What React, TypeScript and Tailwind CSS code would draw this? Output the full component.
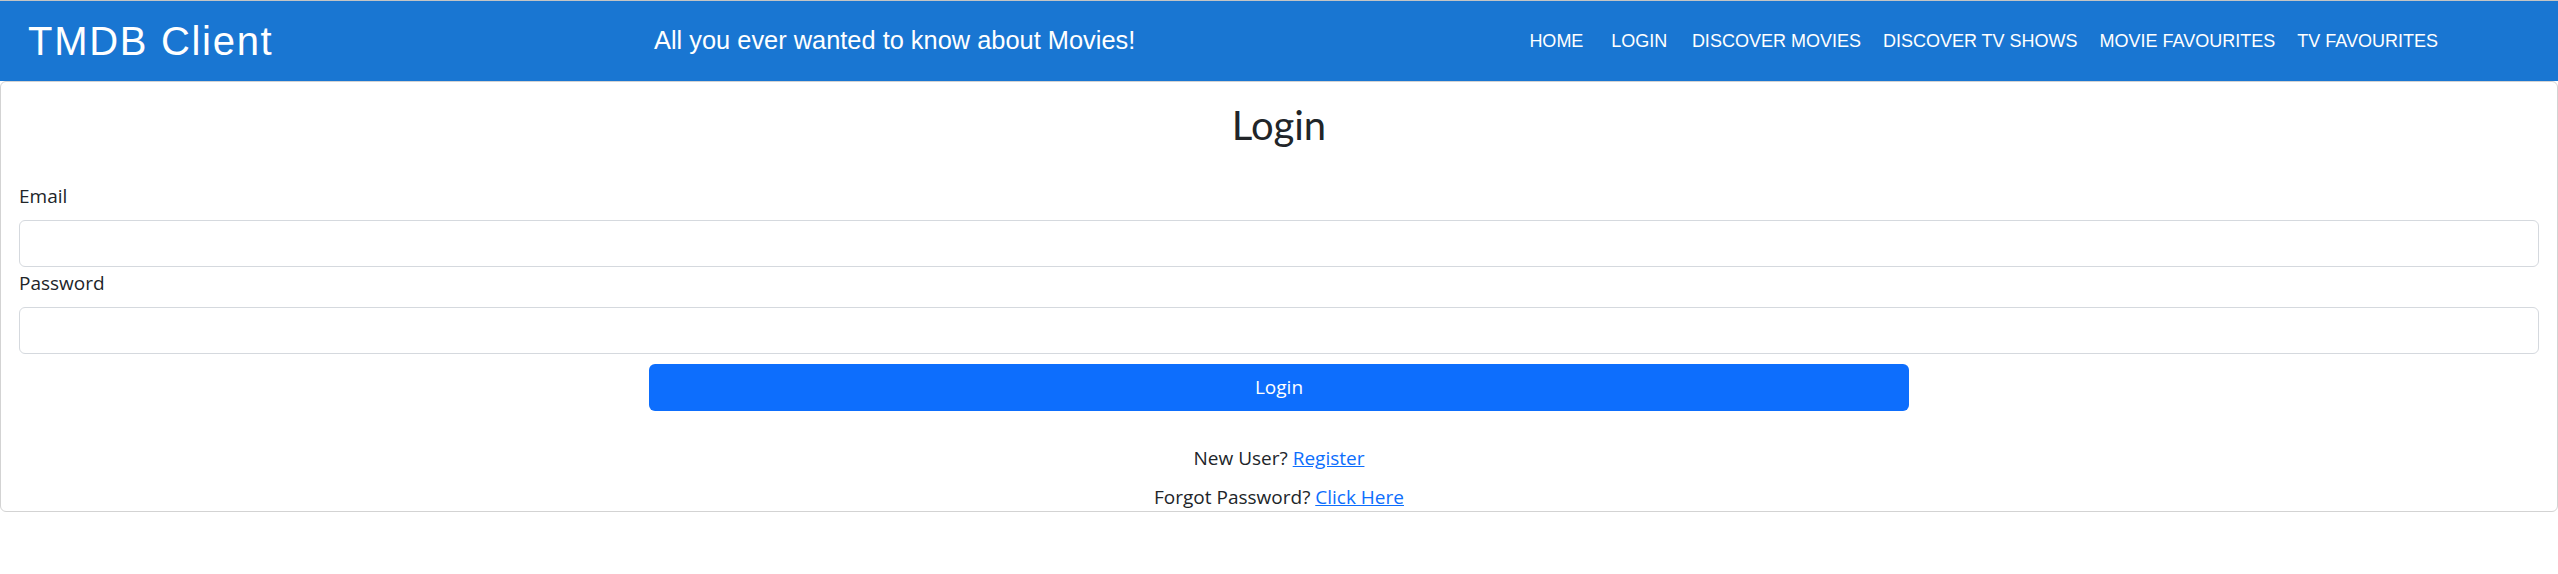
import { useState } from "react";

const navLinks = [
	"HOME",
	"LOGIN",
	"DISCOVER MOVIES",
	"DISCOVER TV SHOWS",
	"MOVIE FAVOURITES",
	"TV FAVOURITES",
];

const SiteHeader = () => {
	return (
		<header className="flex h-[81px] items-center border-t border-[#c4c4c4] bg-[#1976d2] text-white font-['Liberation_Sans',Arial,sans-serif]">
			<div className="w-[654px] shrink-0 pl-[28px]">
				<span className="text-[40px] leading-none tracking-[1.7px]">
					TMDB Client
				</span>
			</div>
			<span className="text-[25.4px] leading-none">
				All you ever wanted to know about Movies!
			</span>
			<nav className="ml-auto flex items-center pr-[109px]">
				{navLinks.map((link) => (
					<button
						key={link}
						className="flex min-w-[83px] justify-center px-[11px] py-[6px] text-[18px] leading-none whitespace-nowrap"
					>
						{link}
					</button>
				))}
			</nav>
		</header>
	);
};

const LoginForm = () => {
	const [email, setEmail] = useState("");
	const [password, setPassword] = useState("");

	return (
		<div className="rounded-md border border-[#d3d3d3] px-[18px] pt-[19px] text-[#212529] font-['Open_Sans',sans-serif]">
			<h1 className="text-center text-[40px] leading-[48px] font-normal font-['Lato',sans-serif]">
				Login
			</h1>

			<label
				htmlFor="email"
				className="mt-[33px] block text-[19px] leading-[28px]"
			>
				Email
			</label>
			<input
				id="email"
				type="email"
				value={email}
				onChange={(e) => setEmail(e.target.value)}
				className="mt-[10px] block h-[47px] w-full rounded-md border border-[#d5d9de] bg-white px-3 text-[19px] outline-none"
			/>

			<label
				htmlFor="password"
				className="mt-[2px] block text-[19px] leading-[28px]"
			>
				Password
			</label>
			<input
				id="password"
				type="password"
				value={password}
				onChange={(e) => setPassword(e.target.value)}
				className="mt-[10px] block h-[47px] w-full rounded-md border border-[#d5d9de] bg-white px-3 text-[19px] outline-none"
			/>

			<button className="mx-auto mt-[10px] block h-[47px] w-1/2 rounded-md bg-[#0d6efd] text-[19px] text-white">
				Login
			</button>

			<p className="mt-[33px] text-center text-[19px] leading-[28px]">
				New User?{" "}
				<a href="#" className="text-[#0d6efd] underline">
					Register
				</a>
			</p>
			<p className="mt-[11px] text-center text-[19px] leading-[28px]">
				Forgot Password?{" "}
				<a href="#" className="text-[#0d6efd] underline">
					Click Here
				</a>
			</p>
		</div>
	);
};

const App = () => {
	return (
		<div className="min-h-screen bg-white">
			<SiteHeader />
			<LoginForm />
		</div>
	);
};

export default App;
